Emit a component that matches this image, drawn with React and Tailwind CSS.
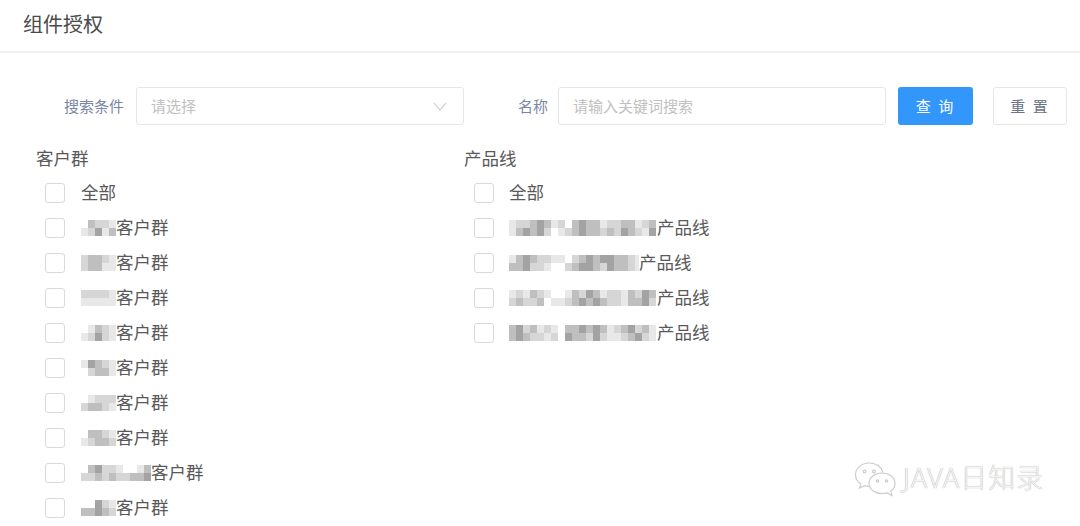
import React from 'react';

const FONT = 'font-["Noto_Sans_CJK_SC","Noto_Sans",sans-serif]';

const shades = {
  '0': 'bg-white',
  '1': 'bg-[#e8e8e8]',
  '2': 'bg-[#d6d6d6]',
  '3': 'bg-[#bfbfbf]',
  '4': 'bg-[#a3a3a3]',
};

// redacted part of a label, two rows of tiles cut to the label's width
function Mosaic({ rows, width }) {
  return (
    <span className="flex flex-col overflow-hidden blur-[0.6px]" style={{ width }}>
      {rows.map((row, i) => (
        <span key={i} className="flex">
          {row.split('').map((c, j) => (
            <span key={j} className={`w-[7px] h-[8px] shrink-0 ${shades[c]}`}></span>
          ))}
        </span>
      ))}
    </span>
  );
}

function Row({ rows, width, suffix, gap }) {
  return (
    <div className="flex items-center h-[35px]">
      <span className="w-5 h-5 shrink-0 rounded-[3px] border border-[#d9d9d9] bg-white"></span>
      <div className={`flex items-center text-[17.5px] text-[#595959] ${gap}`}>
        {rows && <Mosaic rows={rows} width={width} />}
        <span>{suffix}</span>
      </div>
    </div>
  );
}

const customers = [
  { rows: ['03221', '12413'], width: 35 },
  { rows: ['23321', '23311'], width: 35 },
  { rows: ['22221', '11111'], width: 35 },
  { rows: ['01321', '12421'], width: 35 },
  { rows: ['14321', '02331'], width: 35 },
  { rows: ['01222', '23321'], width: 35 },
  { rows: ['03321', '12332'], width: 35 },
  { rows: ['0342210013', '2232322334'], width: 70 },
  { rows: ['00421', '33432'], width: 35 },
];

const products = [
  { rows: ['122343120343312233123', '134342012343323243214'], width: 148 },
  { rows: ['1343221102343443', '3342210023443243'].map((r) => r + '321'), width: 130 },
  { rows: ['121321001324312213243', '232230112343432213342'], width: 148 },
  { rows: ['342312103343431234231', '343221204332421123421'], width: 148 },
];

function WeChatMark() {
  return (
    <svg width="44" height="38" viewBox="0 0 44 38" fill="none" stroke="#cccccc" strokeWidth="1.2">
      <path d="M30 11.500C28.500 5.800 22.800 2 16.500 2 8.800 2 2.500 7.200 2.500 13.700c0 3.700 2 6.900 5.200 9.100L6.500 27l4.800-2.400c1.700.5 3.400.8 5.200.8" />
      <circle cx="11.500" cy="10.500" r="1.400" />
      <circle cx="21" cy="10.500" r="1.400" />
      <path d="M29 12c7.200 0 13 4.700 13 10.500 0 3-1.600 5.700-4.100 7.600l1.100 4.400-4.700-2.600c-1.700.5-3.400.8-5.300.8-7.200 0-13-4.700-13-10.500S21.800 12 29 12Z" fill="#ffffff" />
      <circle cx="24.500" cy="20" r="1.200" />
      <circle cx="33.500" cy="20" r="1.200" />
    </svg>
  );
}

export default function App() {
  return (
    <div className={`relative w-[1080px] h-[526px] overflow-hidden bg-white ${FONT}`}>
      <div className="h-[53px] pl-[23px] flex items-center pb-[3px] border-b-2 border-[#f0f0f0] text-[20px] text-[#4a4a4a]">
        组件授权
      </div>

      <div className="flex items-center mt-[34px] text-[15px]">
        <label className="w-[124px] text-right text-[#7a86a3]">搜索条件</label>
        <div className="ml-[12px] w-[328px] h-[38px] pl-[14px] pr-[16px] flex items-center justify-between rounded-[3px] border border-[#e6e6e6] text-[#c0c0c0]">
          <span>请选择</span>
          <svg width="14" height="9" viewBox="0 0 14 9" fill="none" stroke="#c4c6cc" strokeWidth="1.1">
            <path d="M1 1l6 7 6-7" />
          </svg>
        </div>
        <label className="w-[84px] text-right text-[#7a86a3]">名称</label>
        <div className="ml-[10px] w-[328px] h-[38px] pl-[14px] flex items-center rounded-[3px] border border-[#e6e6e6] text-[#c0c0c0]">
          请输入关键词搜索
        </div>
        <button className="ml-[12px] w-[75px] h-[38px] rounded-[3px] bg-[#3296fa] text-white tracking-[2px]">
          查 询
        </button>
        <button className="ml-[20px] w-[74px] h-[38px] rounded-[3px] border border-[#e6e6e6] text-[#6b7486] tracking-[2px]">
          重 置
        </button>
      </div>

      <div className="flex mt-[16px]">
        <div className="w-[464px] pl-[36px]">
          <div className="h-[34px] flex items-center text-[17.5px] text-[#595959]">客户群</div>
          <div className="pl-[9px]">
            <Row suffix="全部" gap="ml-4" />
            {customers.map((c, i) => (
              <Row key={i} rows={c.rows} width={c.width} suffix="客户群" gap="ml-4" />
            ))}
          </div>
        </div>
        <div>
          <div className="h-[34px] flex items-center text-[17.5px] text-[#595959]">产品线</div>
          <div className="pl-[10px]">
            <Row suffix="全部" gap="ml-[15px]" />
            {products.map((p, i) => (
              <Row key={i} rows={p.rows} width={p.width} suffix="产品线" gap="ml-[15px]" />
            ))}
          </div>
        </div>
      </div>

      {/* watermark over the page */}
      <div className="absolute left-[853px] top-[461px] flex items-center text-[27px] tracking-[1px] text-[#f4f4f4] [text-shadow:0_0_1px_#8f8f8f] font-light">
        <WeChatMark />
        <span className="ml-[6px] -mt-[4px] font-['Noto_Sans','Noto_Sans_CJK_SC',sans-serif]">JAVA日知录</span>
      </div>
    </div>
  );
}
